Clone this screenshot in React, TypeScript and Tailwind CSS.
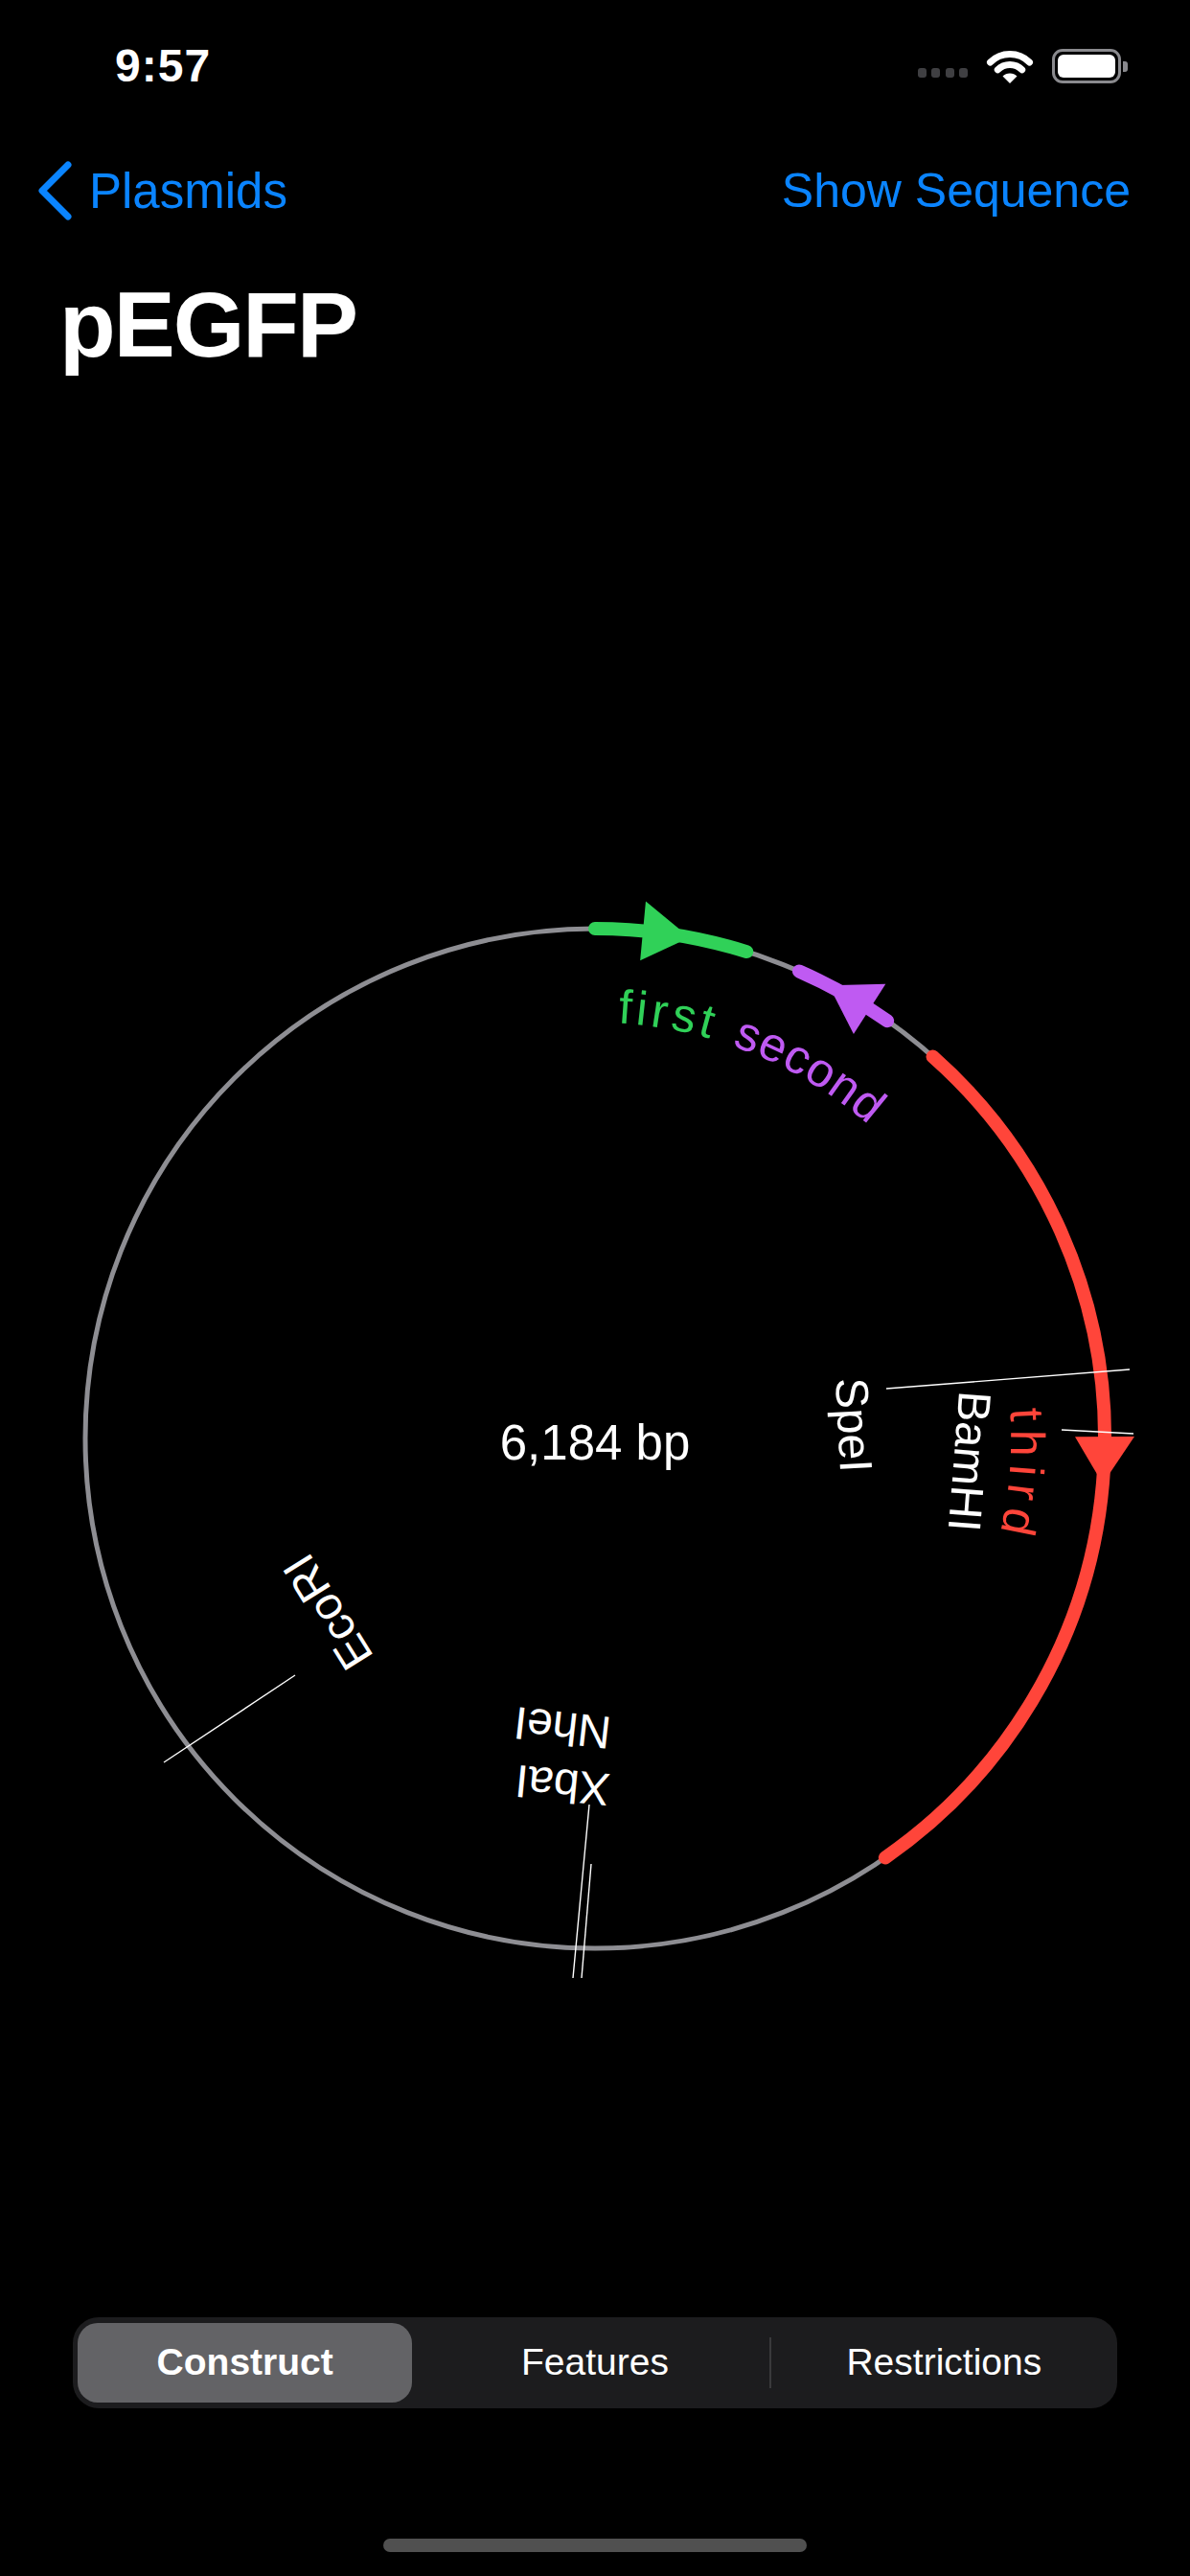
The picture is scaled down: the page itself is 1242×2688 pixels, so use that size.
import React from 'react';

// plasmid map geometry, in page pixels
const CX = 621;
const CY = 1501;
const R = 532;
const TOP = 387; // map container starts here

const pt = (deg: number, r: number) => {
  const a = (deg * Math.PI) / 180;
  return [CX + r * Math.sin(a), CY - r * Math.cos(a)];
};

const arc = (a1: number, a2: number, r: number) => {
  const [x1, y1] = pt(a1, r);
  const [x2, y2] = pt(a2, r);
  const large = a2 - a1 > 180 ? 1 : 0;
  return `M ${x1} ${y1} A ${r} ${r} 0 ${large} 1 ${x2} ${y2}`;
};

const arrow = (base: number, tip: number, r: number) => {
  const [ax, ay] = pt(base, r + 31);
  const [bx, by] = pt(base, r - 31);
  const [tx, ty] = pt(tip, r);
  return `${ax},${ay} ${tx},${ty} ${bx},${by}`;
};

const features = [
  { name: 'first', color: '#30d158', from: 0, to: 17.3, base: 5.4, tip: 10.7, offset: 3.15, span: 12.85 },
  { name: 'second', color: '#bf5af2', from: 23.6, to: 35, base: 32.6, tip: 27.3, offset: 19.2, span: 21.9 },
  { name: 'third', color: '#ff453a', from: 41.5, to: 145.3, base: 89.8, tip: 95.1, offset: 85.9, span: 17.1 },
];

const sites = [
  { name: 'SpeI', x: 891, y: 1487, rot: 87, line: [925, 1449, 1179, 1429] },
  { name: 'BamHI', x: 1012, y: 1525, rot: 94.5, line: [1108, 1492, 1183, 1496] },
  { name: 'EcoRI', x: 342, y: 1682, rot: 238, line: [171, 1839, 308, 1748] },
  { name: 'NheI', x: 587, y: 1803, rot: 186.5, line: [617, 1945, 607, 2064] },
  { name: 'XbaI', x: 587, y: 1863, rot: 185.5, line: [615, 1883, 598, 2064] },
];

const LR = 434; // label baseline radius
const labelPath = `M ${CX} ${CY - LR} A ${LR} ${LR} 0 1 1 ${CX} ${CY + LR} A ${LR} ${LR} 0 1 1 ${CX} ${CY - LR}`;

const PlasmidMap: React.FC = () => (
  <svg viewBox="0 0 1242 2031" width={1242} height={2031} className="block">
    <g transform={`translate(0 ${-TOP})`} fontFamily="Liberation Sans, Arial, sans-serif">
      <defs>
        <path id="label-ring" d={labelPath} fill="none" />
      </defs>
      <circle cx={CX} cy={CY} r={R} fill="none" stroke="#8e8e93" strokeWidth={5} />

      {features.map(f => (
        <g key={f.name}>
          <path d={arc(f.from, f.to, R)} fill="none" stroke={f.color} strokeWidth={14} strokeLinecap="round" />
          <polygon points={arrow(f.base, f.tip, R)} fill={f.color} />
          <text fontSize={50} fill={f.color} textLength={(LR * f.span * Math.PI) / 180} lengthAdjust="spacing">
            <textPath href="#label-ring" startOffset={(LR * f.offset * Math.PI) / 180}>{f.name}</textPath>
          </text>
        </g>
      ))}

      {sites.map(s => (
        <g key={s.name}>
          <line x1={s.line[0]} y1={s.line[1]} x2={s.line[2]} y2={s.line[3]} stroke="#ffffff" strokeWidth={1.4} />
          <text
            x={s.x}
            y={s.y}
            fontSize={48}
            fill="#ffffff"
            textAnchor="middle"
            dominantBaseline="central"
            transform={`rotate(${s.rot} ${s.x} ${s.y})`}
          >
            {s.name}
          </text>
        </g>
      ))}

      <text x={CX} y={1505} fontSize={51} fill="#ffffff" textAnchor="middle" dominantBaseline="central">6,184 bp</text>
    </g>
  </svg>
);

const Wifi = () => (
  <svg width={50} height={38} viewBox="0 0 50 38">
    <path d="M 4.5 15 A 29 29 0 0 1 45.5 15" fill="none" stroke="#fff" strokeWidth={7} strokeLinecap="round" />
    <path d="M 12.3 22.8 A 18 18 0 0 1 37.7 22.8" fill="none" stroke="#fff" strokeWidth={7} strokeLinecap="round" />
    <path d="M 25 37 L 17.5 29.5 A 10.6 10.6 0 0 1 32.5 29.5 Z" fill="#fff" />
  </svg>
);

const Battery = () => (
  <div className="flex items-center">
    <div className="w-[72px] h-[36px] rounded-[11px] border-[3px] border-[#8a8a8e] p-[3px]">
      <div className="w-full h-full rounded-[6px] bg-white" />
    </div>
    <div className="w-[5px] h-[11px] ml-[2px] rounded-r-[3px] bg-[#8a8a8e]" />
  </div>
);

export default function App() {
  return (
    <div className="w-[1242px] h-[2688px] bg-black text-white overflow-hidden font-['Liberation_Sans',Arial,sans-serif]">
      {/* status bar */}
      <div className="h-[138px] flex items-center justify-between pl-[120px] pr-[65px]">
        <span className="text-[48px] font-bold tracking-[1px] leading-none">9:57</span>
        <div className="flex items-center gap-[19px]">
          <div className="flex gap-[5.5px] mt-[14px]">
            {[0, 1, 2, 3].map(i => <div key={i} className="w-[9px] h-[10px] rounded-[3px] bg-[#3f3f42]" />)}
          </div>
          <Wifi />
          <Battery />
        </div>
      </div>

      {/* nav bar */}
      <div className="h-[122px] flex items-center justify-between pl-[39px] pr-[62px] text-[#0a84ff]">
        <div className="flex items-center gap-[16px]">
          <svg width={38} height={64} viewBox="0 0 38 64">
            <polyline points="32,5 5,32 32,59" fill="none" stroke="#0a84ff" strokeWidth={7} strokeLinecap="round" strokeLinejoin="round" />
          </svg>
          <span className="text-[51px] leading-none">Plasmids</span>
        </div>
        <span className="text-[50px] leading-none">Show Sequence</span>
      </div>

      {/* large title */}
      <div className="pt-[31px] pl-[62px]">
        <h1 className="text-[96px] leading-[96px] font-bold tracking-[-2px]">pEGFP</h1>
      </div>

      <PlasmidMap />

      {/* segmented control */}
      <div className="mx-[76px] h-[95px] rounded-[27px] bg-[#1c1c1e] grid grid-cols-3 text-[39px]">
        <div className="flex pl-[5px] pr-[9px] py-[6px]">
          <div className="flex-1 rounded-[21px] bg-[#636366] flex items-center justify-center font-bold">Construct</div>
        </div>
        <div className="flex items-center justify-center">Features</div>
        <div className="flex items-center">
          <div className="w-[2px] h-[53px] bg-[#3a3a3c]" />
          <span className="flex-1 text-center">Restrictions</span>
        </div>
      </div>

      {/* home indicator */}
      <div className="mt-[136px] flex justify-center">
        <div className="w-[442px] h-[14px] rounded-full bg-[#505050]" />
      </div>
    </div>
  );
}
